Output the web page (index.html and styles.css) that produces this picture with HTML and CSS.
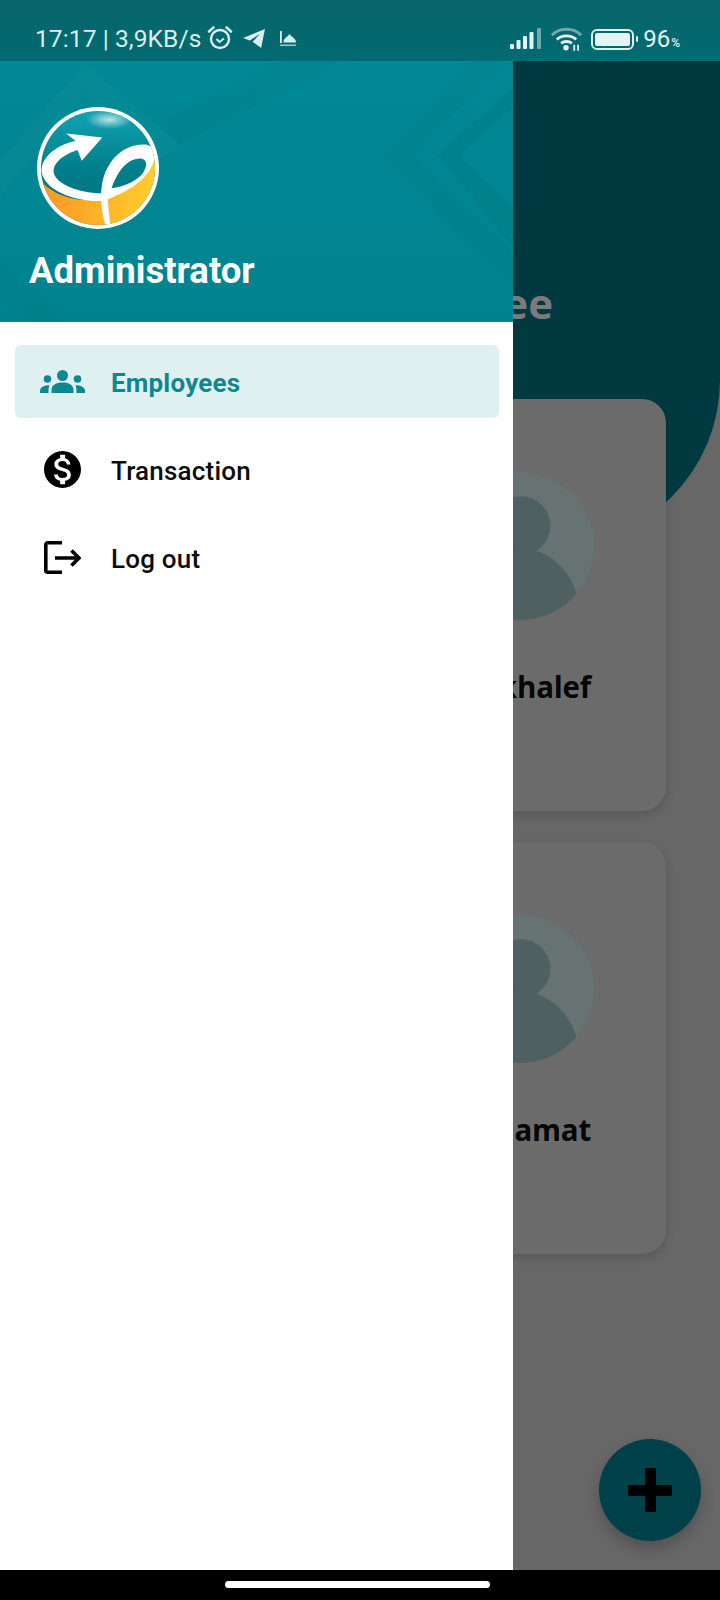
FILE: index.html
```html
<!DOCTYPE html>
<html lang="en">
<head>
<meta charset="utf-8">
<title>Employees</title>
<link rel="stylesheet" href="styles.css">
</head>
<body>
<div class="phone">
  <div class="status">
    <div class="status-left">
      <span class="status-text">17:17 | 3,9KB/s</span>
      <svg class="ic-alarm" viewBox="0 0 26 26"><circle cx="13" cy="14" r="9" fill="none" stroke="#d9efef" stroke-width="2.4"/><path d="M9.5 14l3 3 4.5-3.5" fill="none" stroke="#d9efef" stroke-width="2"/><path d="M2 6.5L6.5 2.5M24 6.5L19.5 2.5" stroke="#d9efef" stroke-width="2.6" stroke-linecap="round"/></svg>
      <svg class="ic-plane" viewBox="0 0 24 20"><path d="M23 0L0 9.5l7 2.7L18 5l-8 8.500L19 20z" fill="#d9efef"/></svg>
      <svg class="ic-mosque" viewBox="0 0 18 16"><path d="M1 0h1.800v12H1z" fill="#d9efef"/><path d="M4.500 11.500C4.500 7 8 6.500 10.500 3 13 6.500 17 7 17 11.500z" fill="#d9efef"/><path d="M1 13.500h16V15H1z" fill="#9fcbce"/></svg>
    </div>
    <div class="status-right">
      <svg class="ic-signal" viewBox="0 0 32 22"><rect x="0" y="16" width="4" height="5" rx="1" fill="#e4f3f3"/><rect x="6.500" y="12" width="4" height="9" rx="1" fill="#e4f3f3"/><rect x="13" y="8" width="4" height="13" rx="1" fill="#e4f3f3"/><rect x="19.500" y="4" width="4" height="17" rx="1" fill="#e4f3f3"/><rect x="27" y="0" width="4" height="21" rx="1" fill="#6fa9ac"/></svg>
      <svg class="ic-wifi" viewBox="0 0 32 24"><path d="M1 8C9 0 23 0 31 8" fill="none" stroke="#6fa9ac" stroke-width="3"/><path d="M6 12.500c5.500-5 14.500-5 20 0" fill="none" stroke="#e4f3f3" stroke-width="3"/><path d="M10.500 16.500c3-2.500 8-2.500 11 0" fill="none" stroke="#e4f3f3" stroke-width="3"/><circle cx="15.500" cy="21" r="2.800" fill="#e4f3f3"/><path d="M24 18v6M28 18v6" stroke="#e4f3f3" stroke-width="1.800"/></svg>
      <div class="battery"><div class="battery-fill"></div></div>
      <div class="battery-tip"></div>
      <span class="status-pct">96<small>%</small></span>
    </div>
  </div>

  <div class="app">
    <div class="app-header"><h1 class="app-title">Employee</h1></div>
    <div class="cards">
      <div class="card">
        <svg class="avatar" viewBox="0 0 146 146"><defs><clipPath id="av1"><circle cx="73" cy="73" r="73"/></clipPath></defs><circle cx="73" cy="73" r="73" fill="#677273"/><g clip-path="url(#av1)" fill="#4f6060"><circle cx="74" cy="53" r="29"/><circle cx="68" cy="137" r="63"/></g></svg>
        <div class="name">khalef</div>
      </div>
      <div class="card">
        <svg class="avatar" viewBox="0 0 146 146"><defs><clipPath id="av2"><circle cx="73" cy="73" r="73"/></clipPath></defs><circle cx="73" cy="73" r="73" fill="#677273"/><g clip-path="url(#av2)" fill="#4f6060"><circle cx="74" cy="53" r="29"/><circle cx="68" cy="137" r="63"/></g></svg>
        <div class="name">damat</div>
      </div>
    </div>
    <button class="fab"><span class="fab-h"></span><span class="fab-v"></span></button>

    <aside class="drawer">
      <header class="drawer-head">
        <svg class="pattern" viewBox="0 0 513 261" preserveAspectRatio="none">
          <path d="M513 26L438 94l75 92v-40L460 94l53-48z" fill="#000" opacity=".035"/>
          <path d="M513-40L380 94 513 225v-32L415 94 513-8z" fill="#000" opacity=".02"/>
          <path d="M0 100L85 2l95 82-30 20-65-70L0 135z" fill="#fff" opacity=".018"/>
          <path d="M0 200L70 261H30L0 235z" fill="#000" opacity=".02"/>
          <path d="M180 84L340 0h-60l-120 60z" fill="#000" opacity=".018"/>
        </svg>
        <svg class="logo" viewBox="50 50 368 368">
          <defs>
            <clipPath id="ball"><circle cx="234" cy="234" r="172"/></clipPath>
            <linearGradient id="sea" x1="0" y1="0" x2="0" y2="1"><stop offset="0" stop-color="#11a4b4"/><stop offset=".5" stop-color="#007e8b"/><stop offset="1" stop-color="#00717c"/></linearGradient>
            <linearGradient id="sun" x1="0" y1="0" x2="1" y2="0"><stop offset="0" stop-color="#fb9322"/><stop offset="1" stop-color="#ffd22e"/></linearGradient>
            <radialGradient id="shine"><stop offset="0" stop-color="#cfeaec" stop-opacity=".9"/><stop offset="1" stop-color="#cfeaec" stop-opacity="0"/></radialGradient>
          </defs>
          <circle cx="234" cy="234" r="184" fill="#fff"/>
          <circle cx="234" cy="234" r="172" fill="url(#sea)"/>
          <g clip-path="url(#ball)">
            <ellipse cx="268" cy="88" rx="70" ry="28" fill="url(#shine)"/>
            <path d="M60 270C100 325 200 345 270 322 330 300 390 250 410 190L430 420H40z" fill="url(#sun)"/>
            <path fill-rule="evenodd" fill="#fff" d="M256 405C238 345 238 280 262 235 285 185 335 160 375 163 400 165 412 185 402 215 387 262 335 300 264 328 264 350 268 380 272 405zM275 295C290 250 320 205 360 205 382 205 385 225 370 248 350 275 310 290 275 295z"/>
          </g>
          <path d="M247 142L138 130 166 152C110 165 62 200 64 245 72 303 170 340 262 333L264 310C190 314 104 285 100 245 100 215 135 192 172 180L185 212z" fill="#fff"/>
        </svg>
        <div class="drawer-title">Administrator</div>
      </header>
      <nav class="menu">
        <a class="item item-active">
          <svg class="ic-people" viewBox="0 0 45 23" fill="#0f8791"><circle cx="22.500" cy="5.500" r="5.500"/><path d="M11.500 23v-3C11.500 15 16 12.500 22.500 12.500S33.500 15 33.500 20v3z"/><circle cx="7.500" cy="9" r="3.800"/><circle cx="37.500" cy="9" r="3.800"/><path d="M0 23v-2c0-3.500 3.500-6 9.500-5.800-.7 1.500-1 3-1 7.800zM45 23v-2c0-3.500-3.500-6-9.500-5.800.7 1.500 1 3 1 7.800z"/></svg>
          <span>Employees</span>
        </a>
        <a class="item">
          <svg class="ic-dollar" viewBox="2 2 20 20"><path fill="#000" d="M12 2C6.480 2 2 6.480 2 12s4.480 10 10 10 10-4.480 10-10S17.520 2 12 2zm1.410 16.090V20h-2.670v-1.930c-1.710-.36-3.160-1.460-3.270-3.400h1.960c.1 1.050.82 1.870 2.650 1.870 1.960 0 2.400-.98 2.400-1.590 0-.83-.44-1.610-2.670-2.140-2.480-.6-4.180-1.620-4.180-3.670 0-1.720 1.390-2.840 3.110-3.210V4h2.670v1.950c1.860.45 2.790 1.860 2.850 3.390H14.300c-.05-1.110-.64-1.870-2.220-1.870-1.500 0-2.400.68-2.400 1.640 0 .84.65 1.390 2.670 1.910s4.180 1.390 4.180 3.910c-.01 1.830-1.380 2.830-3.120 3.160z"/></svg>
          <span>Transaction</span>
        </a>
        <a class="item">
          <svg class="ic-logout" viewBox="0 0 37 33" fill="none" stroke="#000" stroke-width="3.600"><path d="M18 1.800H3.800a2 2 0 0 0-2 2v25.400a2 2 0 0 0 2 2H18"/><path d="M11 17h23.500M27.500 9.500l7.500 7.500-7.500 7.500"/></svg>
          <span>Log out</span>
        </a>
      </nav>
    </aside>
  </div>

  <div class="navbar"><div class="pill"></div></div>
</div>
</body>
</html>
```

FILE: styles.css
```css
* { box-sizing: border-box; }
html, body { margin: 0; padding: 0; background: #000; }
.phone {
  width: 720px;
  height: 1600px;
  display: flex;
  flex-direction: column;
  overflow: hidden;
  font-family: Roboto, "Liberation Sans", sans-serif;
}

/* status bar */
.status {
  height: 61px;
  flex: none;
  display: flex;
  justify-content: space-between;
  align-items: center;
  padding: 17px 40px 0 35px;
  background: linear-gradient(180deg, #08666b 0%, #016a71 100%);
  color: #d9efef;
}
.status-left, .status-right { display: flex; align-items: center; }
.status-text { font-size: 24.5px; letter-spacing: .1px; line-height: 28px; }
.ic-alarm { width: 26px; height: 26px; margin-left: 6px; margin-top: -3px; }
.ic-plane { width: 23px; height: 19px; margin-left: 10px; margin-top: -1px; }
.ic-mosque { width: 18px; height: 16px; margin-left: 13px; }
.ic-signal { width: 32px; height: 22px; }
.ic-wifi { width: 31px; height: 24px; margin-left: 9px; }
.battery {
  width: 43px;
  height: 21px;
  margin-left: 9px;
  border: 2px solid #dcefef;
  border-radius: 6px;
  padding: 2px;
}
.battery-fill { width: 100%; height: 100%; background: #e4f3f3; border-radius: 2px; }
.battery-tip { width: 2px; height: 6px; margin-left: 2px; background: #dcefef; border-radius: 1px; }
.status-pct { font-size: 24px; line-height: 28px; margin-left: 5px; margin-top: 3px; color: #e4f3f3; }
.status-pct small { font-size: 12px; font-weight: 500; margin-left: 1px; }

/* app under the drawer */
.app {
  position: relative;
  flex: 1;
  background: #676767;
  overflow: hidden;
}
.app-header {
  height: 484px;
  background: #003a40;
  border-bottom-right-radius: 165px;
  padding: 212px 167px 0 0;
  text-align: right;
}
.app-title {
  margin: 0;
  font-family: "Open Sans", sans-serif;
  font-size: 42px;
  line-height: 60px;
  font-weight: 700;
  color: #7d7a7b;
}
.cards {
  margin-top: -146px;
  padding: 0 54px;
  display: flex;
  flex-direction: column;
  gap: 31px;
}
.card {
  position: relative;
  height: 412px;
  background: #6b6b6b;
  border-radius: 24px;
  box-shadow: 0 4px 10px rgba(0, 0, 0, .14);
  padding: 73px 72px 0 0;
  display: flex;
  flex-direction: column;
  align-items: flex-end;
}
.avatar { width: 148px; height: 148px; flex: none; }
.name {
  margin-top: 47px;
  margin-right: 3px;
  font-family: "Open Sans", sans-serif;
  font-size: 29.5px;
  line-height: 40px;
  font-weight: 700;
  letter-spacing: -.2px;
  color: #060606;
}
.fab {
  position: absolute;
  left: 599px;
  top: 1378px;
  width: 102px;
  height: 102px;
  border: 0;
  padding: 0;
  border-radius: 50%;
  background: #004049;
  box-shadow: 0 7px 14px rgba(0, 0, 0, .22);
}
.fab-h, .fab-v { position: absolute; background: #000; }
.fab-h { left: 29px; top: 46px; width: 44px; height: 11px; }
.fab-v { left: 46px; top: 29px; width: 11px; height: 44px; }

/* drawer */
.drawer {
  position: absolute;
  left: 0;
  top: 0;
  bottom: 0;
  width: 513px;
  background: #fff;
  display: flex;
  flex-direction: column;
}
.drawer-head {
  position: relative;
  height: 261px;
  flex: none;
  padding: 46px 30px 0 37px;
  overflow: hidden;
  background: linear-gradient(180deg, #008894 0%, #008692 60%, #00838e 100%);
}
.pattern { position: absolute; left: 0; top: 0; width: 100%; height: 100%; }
.logo { position: relative; display: block; width: 122px; height: 122px; }
.drawer-title {
  position: relative;
  margin: 20px 0 0 -8px;
  font-size: 36.5px;
  line-height: 44px;
  font-weight: 700;
  color: #fff;
}
.menu { padding: 23px 14px 0 15px; display: flex; flex-direction: column; gap: 15px; }
.item {
  height: 73px;
  display: flex;
  align-items: center;
  border-radius: 6px;
  font-size: 26px;
  font-weight: 500;
  letter-spacing: .2px;
  color: #0c0c0c;
}
.item span { margin: 3px 0 0 1px; }
.item-active { background: #dff0f1; color: #0f8791; font-weight: 700; }
.ic-people { width: 45px; height: 23px; margin: 0 25px 0 25px; }
.ic-dollar { width: 37px; height: 37px; margin: 0 29px 0 29px; }
.ic-logout { width: 37px; height: 33px; margin: 0 29px 0 29px; }

/* navigation bar */
.navbar {
  height: 30px;
  flex: none;
  background: #000;
  display: flex;
  justify-content: center;
  padding-top: 11px;
}
.pill { width: 265px; height: 7px; margin-right: 5px; border-radius: 4px; background: #fff; }
```
